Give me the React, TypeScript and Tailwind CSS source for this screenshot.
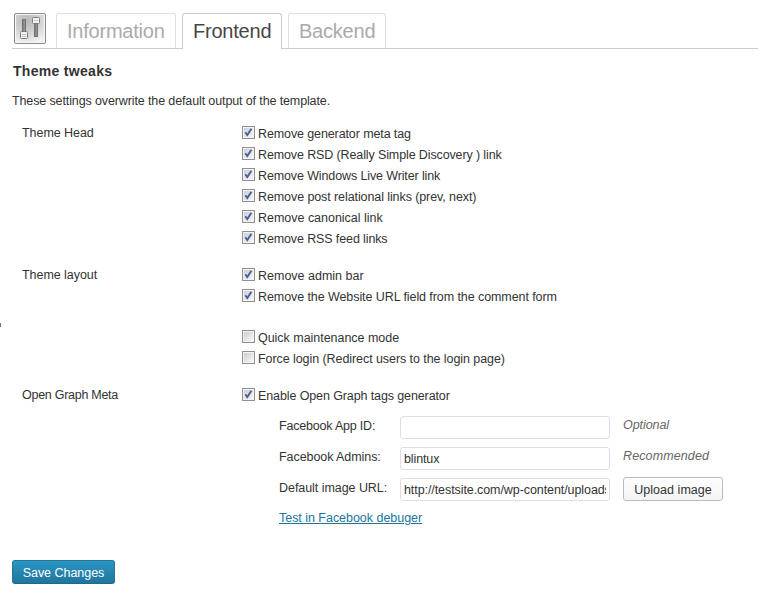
import React from "react";

function Check({ label, checked, spacing }: { label: string; checked?: boolean; spacing: string }) {
  return (
    <label className="flex h-[21px] items-start">
      <span className="mt-[4px] flex h-[13px] w-[13px] shrink-0 border border-[#8e8f8f] bg-[#f4f4f4] p-px">
        <svg width="9" height="9" viewBox="0 0 9 9">
          <defs>
            <linearGradient id="well" x1="0" y1="0" x2="1" y2="1">
              <stop offset="0" stopColor="#cbcfd5" />
              <stop offset="1" stopColor="#f6f6f6" />
            </linearGradient>
          </defs>
          <rect width="9" height="9" fill="url(#well)" />
          {checked && <path d="M1.3 4.2 L3.3 7 L7.4 0.8" fill="none" stroke="#4a5f97" strokeWidth="1.9" />}
        </svg>
      </span>
      <span className={"ml-[3px] whitespace-nowrap leading-[25px] " + spacing}>{label}</span>
    </label>
  );
}

function SlidersIcon() {
  return (
    <svg width="32" height="32" viewBox="0 0 32 32" className="mt-[12px] ml-[2px] shrink-0">
      <defs>
        <radialGradient id="plate" cx="0.4" cy="0.2" r="0.85">
          <stop offset="0" stopColor="#b8b8b8" />
          <stop offset="0.5" stopColor="#cfcfcf" />
          <stop offset="1" stopColor="#f0f0f0" />
        </radialGradient>
      </defs>
      <rect x="0.5" y="1.5" width="31" height="30" rx="1.5" fill="#f5f5f5" stroke="#8c8c8c" />
      <rect x="2" y="3" width="28" height="27" fill="url(#plate)" />
      <rect x="8" y="7" width="4" height="14" rx="0.5" fill="#747474" />
      <rect x="9.5" y="8" width="1.5" height="12" fill="#929292" />
      <rect x="20" y="10" width="4" height="15" rx="0.5" fill="#747474" />
      <rect x="21.5" y="11" width="1.5" height="13" fill="#929292" />
      <rect x="6.5" y="19.5" width="7" height="7" rx="1" fill="#f3f3f3" stroke="#7c7c7c" />
      <path d="M8 22.5h4M8 24.5h4" stroke="#c2c2c2" />
      <rect x="18.5" y="5.5" width="7" height="6" rx="1" fill="#f3f3f3" stroke="#7c7c7c" />
      <path d="M20 8.5h4" stroke="#c2c2c2" />
    </svg>
  );
}

export default function App() {
  return (
    <div className="relative flex h-[598px] w-[771px] flex-col overflow-hidden bg-white pl-[12px] font-['Liberation_Sans',Arial,sans-serif] text-[12.5px] text-[#333]">
      <span className="absolute top-[323px] left-0 h-[4px] w-px bg-[#777]" />
      <header className="flex h-[49px] w-[746px] items-end border-b border-[#ccc] text-[20px] leading-[34px] tracking-[-0.22px] text-[#aaa]">
        <div className="self-start"><SlidersIcon /></div>
        <div className="ml-[10px] h-[35px] w-[120px] rounded-t-[3px] border border-b-0 border-[#dfdfdf] pl-[10px] whitespace-nowrap">Information</div>
        <div className="-mb-px ml-[6px] h-[36px] w-[100px] rounded-t-[3px] border border-b-0 border-[#ccc] bg-white pl-[10px] whitespace-nowrap text-[#464646]">Frontend</div>
        <div className="ml-[6px] h-[35px] w-[98px] rounded-t-[3px] border border-b-0 border-[#dfdfdf] pl-[10px] whitespace-nowrap">Backend</div>
      </header>
      <h3 className="mt-[12px] ml-[1px] h-[20px] text-[14px] leading-[20px] font-bold tracking-[0.3px] text-[#333]">Theme tweaks</h3>
      <p className="mt-[10px] h-[20px] leading-[20px] tracking-[-0.12px]">These settings overwrite the default output of the template.</p>

      <section className="mt-[11px] flex pl-[10px]">
        <div className="w-[220px] leading-[22px] tracking-[-0.05px]">Theme Head</div>
        <div className="flex flex-col">
          <Check checked label="Remove generator meta tag" spacing="tracking-[-0.11px]" />
          <Check checked label="Remove RSD (Really Simple Discovery ) link" spacing="tracking-[-0.12px]" />
          <Check checked label="Remove Windows Live Writer link" spacing="tracking-[-0.12px]" />
          <Check checked label="Remove post relational links (prev, next)" spacing="tracking-[-0.09px]" />
          <Check checked label="Remove canonical link" spacing="tracking-[-0.02px]" />
          <Check checked label="Remove RSS feed links" spacing="tracking-[-0.12px]" />
        </div>
      </section>

      <section className="mt-[16px] flex pl-[10px]">
        <div className="w-[220px] leading-[22px] tracking-[-0.05px]">Theme layout</div>
        <div className="flex flex-col">
          <Check checked label="Remove admin bar" spacing="tracking-[0px]" />
          <Check checked label="Remove the Website URL field from the comment form" spacing="tracking-[-0.08px]" />
          <div className="h-[20px]" />
          <Check label="Quick maintenance mode" spacing="tracking-[-0.03px]" />
          <Check label="Force login (Redirect users to the login page)" spacing="tracking-[-0.07px]" />
        </div>
      </section>

      <section className="mt-[16px] flex pl-[10px]">
        <div className="w-[220px] leading-[22px] tracking-[-0.27px]">Open Graph Meta</div>
        <div className="flex flex-col">
          <Check checked label="Enable Open Graph tags generator" spacing="tracking-[-0.11px]" />
          <div className="mt-[10px] grid grid-cols-[121px_210px_113px] pl-[37px]">
            <div className="h-[31px] leading-[22px] tracking-[-0.2px]">Facebook App ID:</div>
            <div className="mt-px h-[23px] rounded-[3px] border border-[#dfdfdf]" />
            <em className="pl-[13px] leading-[20px] tracking-[-0.07px] text-[#666]">Optional</em>
            <div className="h-[31px] leading-[22px] tracking-[-0.07px]">Facebook Admins:</div>
            <div className="mt-px h-[23px] rounded-[3px] border border-[#dfdfdf] px-[3px] leading-[22px] tracking-[-0.12px]">blintux</div>
            <em className="pl-[13px] leading-[20px] tracking-[0.12px] text-[#666]">Recommended</em>
            <div className="h-[31px] leading-[22px] tracking-[-0.05px]">Default image URL:</div>
            <div className="mt-px h-[23px] rounded-[3px] border border-[#dfdfdf] px-[3px] leading-[22px] tracking-[-0.08px]">
              <div className="overflow-hidden whitespace-nowrap">http://testsite.com/wp-content/uploads</div>
            </div>
            <button className="ml-[13px] h-[24px] w-[100px] rounded-[3px] border border-[#bbb] bg-linear-to-b from-[#fefefe] to-[#f4f4f4] text-center leading-[24px] tracking-[0.05px] whitespace-nowrap">Upload image</button>
            <a className="h-[20px] leading-[20px] tracking-[-0.03px] whitespace-nowrap text-[#21759b] underline">Test in Facebook debuger</a>
          </div>
        </div>
      </section>

      <button className="mt-[32px] h-[24px] w-[103px] rounded-[3px] border border-[#21759b] border-b-[#1e6a8d] bg-linear-to-b from-[#2a95c5] to-[#21759b] text-center leading-[24px] tracking-[-0.03px] whitespace-nowrap text-white">Save Changes</button>
    </div>
  );
}
